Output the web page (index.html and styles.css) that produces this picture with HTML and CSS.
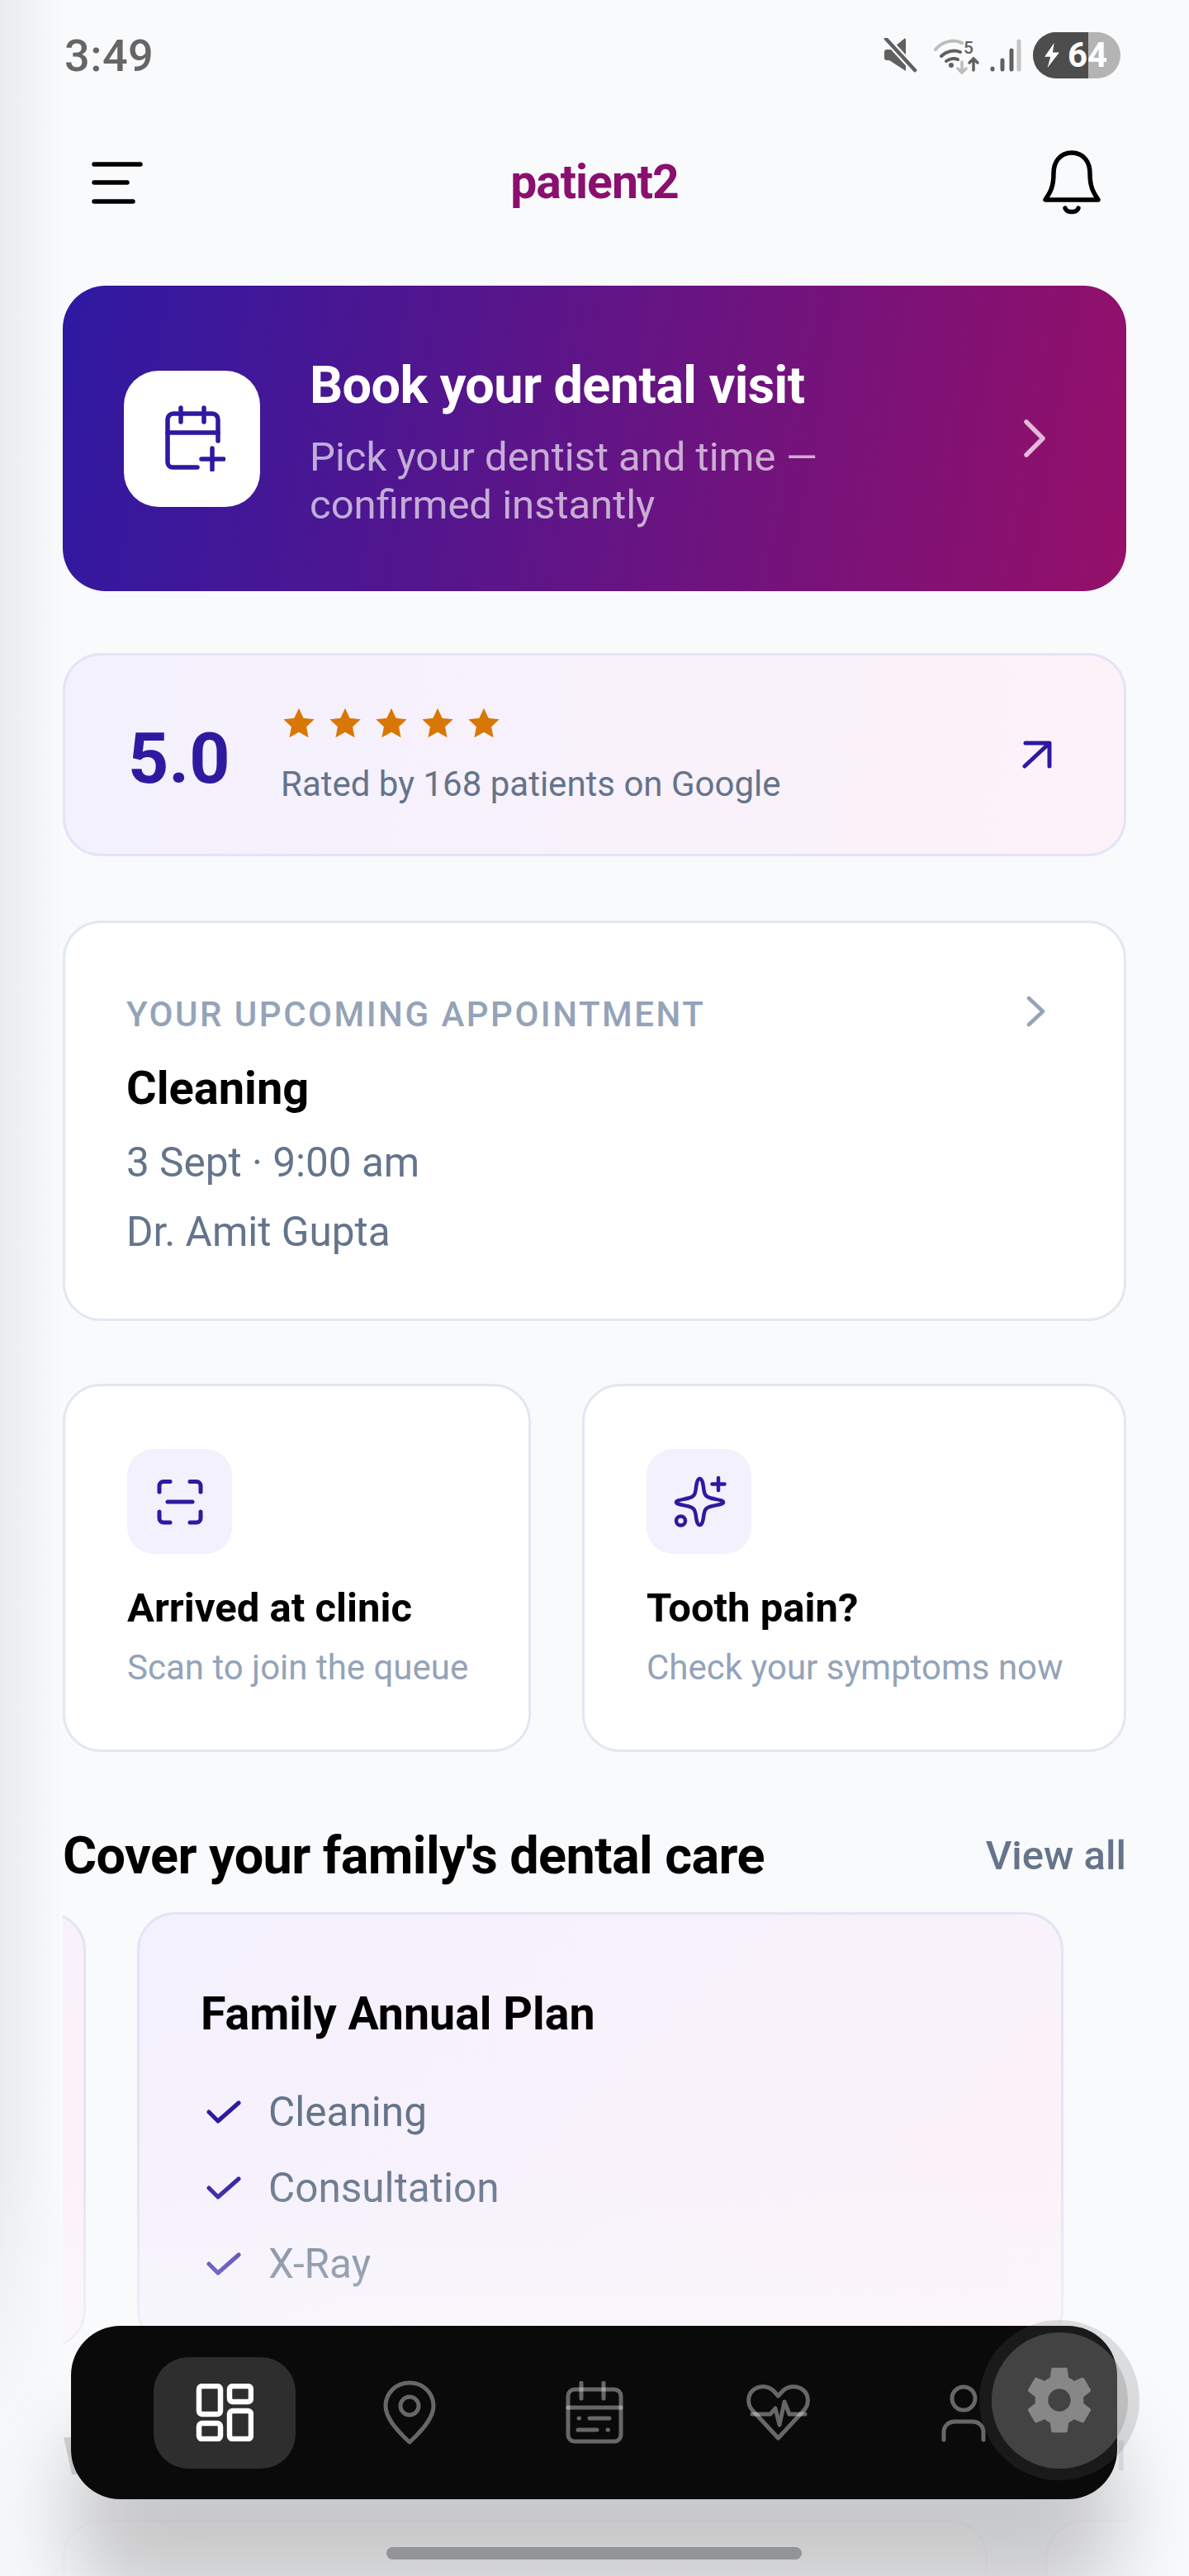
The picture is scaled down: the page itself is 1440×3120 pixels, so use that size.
FILE: index.html
```html
<!DOCTYPE html>
<html lang="en">
<head>
    <meta charset="UTF-8">
    <title>patient2</title>
    <link rel="stylesheet" href="styles.css">
</head>
<body>
    <div class="status-bar">
        <span class="clock">3:49</span>
        <div class="status-icons">
            <svg class="ic-mute" viewBox="0 0 42 42" fill="none">
                <path d="M2 17c0-2 1-3 3-3h5L26 1c1-1 2 0 2 1v38L8 27H5c-2 0-3-1-3-3z" fill="#606060"/>
                <path d="M5 2l35 38" stroke="#f9fafc" stroke-width="9"/>
                <path d="M4 1l35 38" stroke="#606060" stroke-width="4.5" stroke-linecap="round"/>
            </svg>
            <svg class="ic-wifi" viewBox="0 0 56 46" fill="none" stroke-linecap="round">
                <path d="M2 16C10 6 24 3 34 8" stroke="#bdbdbd" stroke-width="4"/>
                <path d="M9 24c6-6 15-8 23-5M15 30c4-3 10-4 14-2" stroke="#606060" stroke-width="4"/>
                <circle cx="21" cy="35" r="3" fill="#606060"/>
                <path d="M34 31v13M29 39l5 5 5-5" stroke="#bdbdbd" stroke-width="3.5"/>
                <path d="M48 41V27M43 32l5-5 5 5" stroke="#606060" stroke-width="3.5"/>
                <text x="36" y="21" class="wifi-five">5</text>
            </svg>
            <svg class="ic-signal" viewBox="0 0 38 40" fill="none" stroke-linecap="round" stroke-width="5">
                <path d="M3 36v1M15 26v11M26 14v23" stroke="#606060"/>
                <path d="M35 3v34" stroke="#c4c4c4"/>
            </svg>
            <div class="battery">
                <div class="battery-fill"></div>
                <svg class="ic-bolt" viewBox="0 0 24 36"><path d="M15 1L2 20h8L6 35 22 14h-9z" fill="#fff"/></svg>
                <span class="battery-num">64</span>
            </div>
        </div>
    </div>

    <header class="top-bar">
        <svg class="ic-menu" viewBox="0 0 62 52" fill="none" stroke="#000" stroke-width="5.5" stroke-linecap="round">
            <path d="M3 3h56M3 25h40M3 48h47"/>
        </svg>
        <h1 class="brand">patient2</h1>
        <svg class="ic-bell" viewBox="0 0 72 80" fill="none" stroke="#000" stroke-width="5.5" stroke-linecap="round" stroke-linejoin="round">
            <path d="M36 3C21 3 14 15 14 28c0 18-5 24-10 32h64c-5-8-10-14-10-32C58 15 51 3 36 3z"/>
            <path d="M28 70c2 6 14 6 16 0"/>
        </svg>
    </header>

    <main class="content">
        <section class="hero">
            <div class="hero-tile">
                <svg viewBox="0 0 80 80" fill="none" stroke="#2e1aa0" stroke-width="5.5" stroke-linecap="round" stroke-linejoin="round">
                    <path d="M46 75H16a6 6 0 0 1-6-6V17a7 7 0 0 1 7-7h47a7 7 0 0 1 7 7v26"/>
                    <path d="M10 33h61M26 3v17M54 3v17M64 52v26M51 65h27"/>
                </svg>
            </div>
            <div class="hero-text">
                <h2>Book your dental visit</h2>
                <p>Pick your dentist and time — confirmed instantly</p>
            </div>
            <svg class="hero-chevron" viewBox="0 0 28 46" fill="none" stroke="#e3bbd9" stroke-width="5.5" stroke-linecap="round" stroke-linejoin="round">
                <path d="M3 3l20 20L3 43"/>
            </svg>
        </section>

        <section class="rating">
            <div class="rating-score">5.0</div>
            <div class="rating-info">
                <div class="stars">
                    <svg viewBox="0 0 24 24"><path d="M12 1.5l3.200 6.900 7.500.9-5.500 5.100 1.400 7.400-6.600-3.700-6.600 3.700 1.400-7.400L1.300 9.300l7.500-.9z"/></svg>
                    <svg viewBox="0 0 24 24"><path d="M12 1.5l3.200 6.900 7.500.9-5.500 5.100 1.400 7.400-6.600-3.700-6.600 3.700 1.400-7.400L1.300 9.300l7.500-.9z"/></svg>
                    <svg viewBox="0 0 24 24"><path d="M12 1.5l3.200 6.900 7.500.9-5.500 5.100 1.400 7.400-6.600-3.700-6.600 3.700 1.400-7.400L1.300 9.300l7.500-.9z"/></svg>
                    <svg viewBox="0 0 24 24"><path d="M12 1.5l3.200 6.900 7.500.9-5.500 5.100 1.400 7.400-6.600-3.700-6.600 3.700 1.400-7.400L1.300 9.300l7.500-.9z"/></svg>
                    <svg viewBox="0 0 24 24"><path d="M12 1.5l3.200 6.900 7.500.9-5.500 5.100 1.400 7.400-6.600-3.700-6.600 3.700 1.400-7.400L1.300 9.300l7.500-.9z"/></svg>
                </div>
                <p>Rated by 168 patients on Google</p>
            </div>
            <svg class="rating-arrow" viewBox="0 0 36 34" fill="none" stroke="#2e1aa0" stroke-width="5" stroke-linecap="round" stroke-linejoin="round">
                <path d="M3 31L32 4M4 3h29v28"/>
            </svg>
        </section>

        <section class="appointment">
            <div class="appointment-head">
                <span class="appointment-label">YOUR UPCOMING APPOINTMENT</span>
                <svg viewBox="0 0 24 38" fill="none" stroke="#94a3b8" stroke-width="4.5" stroke-linecap="round" stroke-linejoin="round">
                    <path d="M3 3l17 16L3 35"/>
                </svg>
            </div>
            <h3>Cleaning</h3>
            <p>3 Sept · 9:00 am</p>
            <p>Dr. Amit Gupta</p>
        </section>

        <section class="actions">
            <div class="action-card">
                <div class="action-tile">
                    <svg viewBox="0 0 64 64" fill="none" stroke="#2e1aa0" stroke-width="5" stroke-linecap="round">
                        <path d="M20 7.5h-8a5 5 0 0 0-5 5V20M44 7.5h8a5 5 0 0 1 5 5V20M7 44v8a5 5 0 0 0 5 5h8M57 44v8a5 5 0 0 1-5 5h-8M17 32h30"/>
                    </svg>
                </div>
                <h4>Arrived at clinic</h4>
                <p>Scan to join the queue</p>
            </div>
            <div class="action-card">
                <div class="action-tile">
                    <svg viewBox="0 0 72 72" fill="none" stroke="#2e1aa0" stroke-width="4.5" stroke-linecap="round" stroke-linejoin="round">
                        <path d="M36.5 8C39.5 8 40.5 14 41.5 22 42.3 27.5 44 30 50 31.5 58 33.5 65 34 65 36.5 65 39 58 39.5 50 41.5 44 43 42.3 45.5 41.5 51 40.5 59 39.5 64 36.5 64 33.5 64 32.5 59 31.5 51 30.7 45.5 29 43 23 41.5 15 39.5 8 39 8 36.5 8 34 15 33.5 23 31.5 29 30 30.7 27.5 31.5 22 32.5 14 33.5 8 36.5 8Z"/>
                        <path d="M59 7v15M51.5 14.5h15"/>
                        <circle cx="13.5" cy="59" r="5.5"/>
                    </svg>
                </div>
                <h4>Tooth pain?</h4>
                <p>Check your symptoms now</p>
            </div>
        </section>

        <div class="section-head">
            <h2>Cover your family's dental care</h2>
            <span>View all</span>
        </div>
        <section class="plans">
            <div class="plan-card"></div>
            <div class="plan-card">
                <h3>Family Annual Plan</h3>
                <ul>
                    <li><svg viewBox="0 0 42 30" fill="none" stroke="#2e1aa0" stroke-width="5" stroke-linecap="round" stroke-linejoin="round"><path d="M3 15l11 11L39 4"/></svg>Cleaning</li>
                    <li><svg viewBox="0 0 42 30" fill="none" stroke="#2e1aa0" stroke-width="5" stroke-linecap="round" stroke-linejoin="round"><path d="M3 15l11 11L39 4"/></svg>Consultation</li>
                    <li><svg viewBox="0 0 42 30" fill="none" stroke="#2e1aa0" stroke-width="5" stroke-linecap="round" stroke-linejoin="round"><path d="M3 15l11 11L39 4"/></svg>X-Ray</li>
                </ul>
            </div>
        </section>

        <div class="section-head next">
            <h2>What patients say</h2>
            <span>View all</span>
        </div>
        <section class="reviews">
            <div class="review-card"></div>
            <div class="review-card"></div>
        </section>
    </main>

    <div class="left-edge"></div>
    <div class="bottom-fade"></div>

    <nav class="tab-bar">
        <div class="tab active">
            <svg class="ic-grid" viewBox="0 0 70 70" fill="none" stroke="#fff" stroke-width="6.5">
                <rect x="4" y="3" width="26" height="34" rx="4"/>
                <rect x="41" y="3" width="26" height="19" rx="4"/>
                <rect x="4" y="48" width="26" height="19" rx="4"/>
                <rect x="41" y="33" width="26" height="34" rx="4"/>
            </svg>
        </div>
        <div class="tab">
            <svg class="ic-pin" viewBox="0 0 64 78" fill="none" stroke="rgba(255,255,255,0.38)" stroke-width="5" stroke-linejoin="round">
                <path d="M32 3C15 3 3 16 3 31c0 15 15 31 29 44 14-13 29-29 29-44C61 16 49 3 32 3z"/>
                <circle cx="32" cy="31" r="11"/>
            </svg>
        </div>
        <div class="tab">
            <svg class="ic-cal" viewBox="0 0 70 76" fill="none" stroke="rgba(255,255,255,0.38)" stroke-width="5" stroke-linecap="round" stroke-linejoin="round">
                <rect x="3" y="10" width="64" height="63" rx="8"/>
                <path d="M19 2v19M46 2v19M3 32h64M29 45h24M15 59h23M16 45h.5M51 59h.5"/>
            </svg>
        </div>
        <div class="tab">
            <svg class="ic-heart" viewBox="0 0 80 70" fill="none" stroke="rgba(255,255,255,0.38)" stroke-width="5" stroke-linecap="round" stroke-linejoin="round">
                <path d="M39.5 66L8 32C2 25 2 14 9 8 17 1 29 3 35 10l4.500 5 4.500-5C50 3 62 1 70 8c7 6 7 17 1 24z"/>
                <path d="M8 37h22l6-7 5 20 6-28 6 15h19"/>
            </svg>
        </div>
        <div class="tab">
            <svg class="ic-user" viewBox="0 0 60 72" fill="none" stroke="rgba(255,255,255,0.38)" stroke-width="5" stroke-linecap="round">
                <circle cx="30" cy="19" r="14"/>
                <path d="M6 69v-9c0-8 6-13 13-13h22c7 0 13 5 13 13v9"/>
            </svg>
        </div>
    </nav>

    <div class="gear-ring">
        <div class="gear-btn">
            <svg viewBox="0 0 24 24"><path fill="#878787" d="M19.43 12.98c.04-.32.07-.64.07-.98s-.03-.66-.07-.98l2.11-1.65c.19-.15.24-.42.12-.64l-2-3.46c-.12-.22-.39-.3-.61-.22l-2.49 1c-.52-.4-1.08-.73-1.69-.98l-.38-2.65C14.46 2.18 14.25 2 14 2h-4c-.25 0-.46.18-.49.42l-.38 2.65c-.61.25-1.17.59-1.69.98l-2.49-1c-.23-.09-.49 0-.61.22l-2 3.46c-.13.22-.07.49.12.64l2.11 1.65c-.04.32-.07.65-.07.98s.03.66.07.98l-2.11 1.65c-.19.15-.24.42-.12.64l2 3.46c.12.22.39.3.61.22l2.49-1c.52.4 1.08.73 1.69.98l.38 2.65c.03.24.24.42.49.42h4c.25 0 .46-.18.49-.42l.38-2.65c.61-.25 1.17-.59 1.69-.98l2.49 1c.23.09.49 0 .61-.22l2-3.46c.12-.22.07-.49-.12-.64l-2.11-1.65zM12 15.5c-1.93 0-3.5-1.57-3.5-3.5s1.57-3.5 3.5-3.5 3.5 1.57 3.5 3.5-1.57 3.5-3.5 3.5z"/></svg>
        </div>
    </div>

    <div class="home-pill"></div>
</body>
</html>
```

FILE: styles.css
```css
* {
    box-sizing: border-box;
}
html, body {
    margin: 0;
    height: 3120px;
    overflow: hidden;
}
body {
    position: relative;
    background-color: #f9fafc;
    font-family: Roboto, "Liberation Sans", sans-serif;
    color: #000;
}
h1, h2, h3, h4, p, ul {
    margin: 0;
    padding: 0;
}
svg {
    display: block;
    flex-shrink: 0;
}

/* status bar */
.status-bar {
    display: flex;
    justify-content: space-between;
    align-items: center;
    height: 56px;
    margin-top: 39px;
    padding: 0 83px 0 78px;
}
.clock {
    font-size: 54px;
    font-weight: 500;
    color: #666;
    letter-spacing: 0.5px;
}
.status-icons {
    display: flex;
    align-items: center;
}
.ic-mute {
    width: 42px;
    height: 42px;
    margin-right: 20px;
}
.ic-wifi {
    width: 56px;
    height: 46px;
    margin-right: 12px;
}
.wifi-five {
    font-size: 21px;
    font-weight: 500;
    fill: #606060;
}
.ic-signal {
    width: 38px;
    height: 40px;
    margin-right: 14px;
}
.battery {
    position: relative;
    display: flex;
    align-items: center;
    width: 106px;
    height: 56px;
    border-radius: 28px;
    overflow: hidden;
    background-color: #b4b4b4;
    padding-left: 12px;
}
.battery-fill {
    position: absolute;
    top: 0;
    bottom: 0;
    left: 0;
    width: 67px;
    background-color: #4d4d4d;
}
.ic-bolt {
    position: relative;
    width: 22px;
    height: 32px;
}
.battery-num {
    position: relative;
    margin-left: 8px;
    font-size: 42px;
    font-weight: 700;
    color: #fff;
    line-height: 56px;
}

/* top bar */
.top-bar {
    display: flex;
    justify-content: space-between;
    align-items: center;
    height: 84px;
    margin-top: 85px;
    padding: 0 106px 0 111px;
}
.ic-menu {
    width: 62px;
    height: 52px;
}
.ic-bell {
    width: 72px;
    height: 80px;
}
.brand {
    font-size: 57px;
    font-weight: 700;
    color: #8a0f6e;
    letter-spacing: -1px;
    margin-left: 5px;
    margin-top: -3px;
}

.content {
    padding: 82px 76px 0;
}

/* hero */
.hero {
    display: flex;
    align-items: center;
    height: 370px;
    margin-bottom: 75px;
    padding: 0 96px 0 74px;
    border-radius: 52px;
    background: linear-gradient(100deg, #2e19a2, #951069);
    color: #fff;
}
.hero-tile {
    display: flex;
    align-items: center;
    justify-content: center;
    width: 165px;
    height: 165px;
    margin-right: 60px;
    border-radius: 42px;
    background-color: #fff;
}
.hero-tile svg {
    width: 80px;
    height: 80px;
}
.hero-text {
    flex: 1;
    padding-top: 10px;
}
.hero-text h2 {
    font-size: 63px;
    font-weight: 700;
    line-height: 72px;
    letter-spacing: -0.6px;
    margin-bottom: 22px;
}
.hero-text p {
    max-width: 680px;
    font-size: 49px;
    line-height: 58px;
    color: rgba(255, 255, 255, 0.65);
}
.hero-chevron {
    width: 28px;
    height: 46px;
}

/* rating */
.rating {
    display: flex;
    align-items: center;
    height: 246px;
    margin-bottom: 78px;
    padding: 0 87px 0 76px;
    border: 3px solid #e4e3f7;
    border-radius: 46px;
    background: linear-gradient(100deg, #f3f1fe, #fdf2f8);
}
.rating-score {
    width: 185px;
    padding-top: 8px;
    font-size: 86px;
    font-weight: 700;
    color: #2e1aa0;
}
.rating-info {
    flex: 1;
}
.stars {
    display: flex;
    gap: 14px;
    margin-bottom: 28px;
    padding-left: 1px;
}
.stars svg {
    width: 42px;
    height: 42px;
    fill: #d97706;
}
.rating-info p {
    font-size: 42px;
    color: #64748b;
}
.rating-arrow {
    width: 36px;
    height: 34px;
}

/* appointment */
.appointment {
    height: 485px;
    margin-bottom: 76px;
    padding: 86px 94px 0 74px;
    border: 3px solid #e2e8f0;
    border-radius: 46px;
    background-color: #fff;
}
.appointment-head {
    display: flex;
    justify-content: space-between;
    align-items: center;
    margin-bottom: 32px;
}
.appointment-head svg {
    width: 24px;
    height: 38px;
    margin-bottom: 8px;
}
.appointment-label {
    font-size: 42px;
    font-weight: 500;
    letter-spacing: 2.5px;
    color: #94a3b8;
}
.appointment h3 {
    font-size: 56px;
    font-weight: 700;
    margin-bottom: 28px;
}
.appointment p {
    font-size: 49.5px;
    color: #64748b;
    margin-bottom: 26px;
}

/* arrived / tooth pain */
.actions {
    display: grid;
    grid-template-columns: 567px 659px;
    gap: 62px;
    height: 446px;
}
.action-card {
    padding: 76px 40px 0 75px;
    border: 3px solid #e2e8f0;
    border-radius: 46px;
    background-color: #fff;
}
.action-tile {
    display: flex;
    align-items: center;
    justify-content: center;
    width: 127px;
    height: 127px;
    margin-bottom: 37px;
    border-radius: 32px;
    background-color: #f3f1fe;
}
.action-tile svg {
    width: 64px;
    height: 64px;
}
.action-card + .action-card svg {
    width: 72px;
    height: 72px;
}
.action-card h4 {
    font-size: 49px;
    font-weight: 700;
    margin-bottom: 19px;
}
.action-card p {
    font-size: 42px;
    color: #94a3b8;
}

/* plans */
.section-head {
    display: flex;
    justify-content: space-between;
    align-items: center;
    margin-top: 90px;
    height: 70px;
}
.section-head h2 {
    font-size: 63px;
    font-weight: 700;
    letter-spacing: -0.6px;
}
.section-head span {
    font-size: 49px;
    font-weight: 500;
    color: #64748b;
}
.plans {
    display: flex;
    justify-content: flex-end;
    gap: 62px;
    height: 528px;
    margin-top: 34px;
    padding-right: 76px;
    overflow: hidden;
}
.plan-card {
    flex-shrink: 0;
    width: 1122px;
    height: 528px;
    padding: 88px 75px 0 74px;
    border: 3px solid #e4e3f7;
    border-radius: 46px;
    background: linear-gradient(135deg, #f3f1fe, #fdf2f8);
}
.plan-card h3 {
    font-size: 55.5px;
    font-weight: 700;
    margin-bottom: 40px;
}
.plan-card ul {
    list-style: none;
}
.plan-card li {
    display: flex;
    align-items: center;
    height: 92px;
    font-size: 49.5px;
    color: #64748b;
}
.plan-card li svg {
    width: 42px;
    height: 30px;
    margin: 0 33px 0 7px;
}

/* next section, mostly hidden behind the tab bar */
.next {
    margin-top: 96px;
}
.reviews {
    display: flex;
    gap: 70px;
    height: 67px;
    margin-top: 42px;
    overflow: hidden;
}
.review-card {
    flex-shrink: 0;
    width: 1120px;
    height: 300px;
    border: 3px solid #e4e3f7;
    border-radius: 46px;
    background-color: #fff;
}

/* overlays */
.left-edge {
    position: absolute;
    top: 0;
    bottom: 0;
    left: 0;
    width: 76px;
    background: linear-gradient(90deg, rgba(0, 0, 0, 0.06), rgba(0, 0, 0, 0));
}
.bottom-fade {
    position: absolute;
    top: 2620px;
    left: 0;
    right: 0;
    bottom: 0;
    background: linear-gradient(180deg, rgba(249, 250, 252, 0), rgba(249, 250, 252, 0.85) 327px);
}
.tab-bar {
    position: absolute;
    top: 2817px;
    left: 86px;
    width: 1267px;
    height: 210px;
    display: flex;
    justify-content: space-between;
    align-items: center;
    padding: 0 100px;
    border-radius: 60px;
    background-color: #0a0a0a;
    box-shadow: 0 120px 100px rgba(0, 0, 0, 0.2);
}
.tab {
    display: flex;
    align-items: center;
    justify-content: center;
    width: 172px;
    height: 135px;
    border-radius: 42px;
}
.tab.active {
    background-color: #2e2e2e;
}
.ic-grid {
    width: 70px;
    height: 70px;
}
.ic-pin {
    width: 64px;
    height: 78px;
}
.ic-cal {
    width: 70px;
    height: 76px;
}
.ic-heart {
    width: 80px;
    height: 70px;
}
.ic-user {
    width: 60px;
    height: 72px;
}
.gear-ring {
    position: absolute;
    top: 2810px;
    left: 1186px;
    width: 194px;
    height: 194px;
    display: flex;
    align-items: center;
    justify-content: center;
    border-radius: 50%;
    background-color: rgba(95, 95, 95, 0.19);
}
.gear-btn {
    display: flex;
    align-items: center;
    justify-content: center;
    width: 165px;
    height: 165px;
    border-radius: 50%;
    background-color: rgba(140, 140, 140, 0.36);
}
.gear-btn svg {
    width: 94px;
    height: 94px;
}
.home-pill {
    position: absolute;
    top: 3085px;
    left: 468px;
    width: 503px;
    height: 15px;
    border-radius: 8px;
    background-color: #939495;
}
```
